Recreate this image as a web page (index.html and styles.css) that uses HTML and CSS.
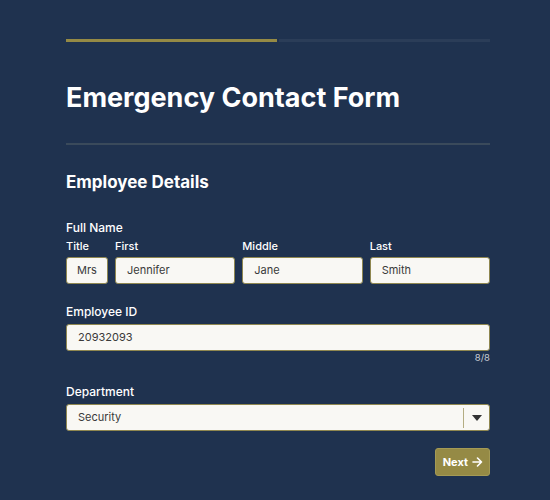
FILE: index.html
```html
<!DOCTYPE html>
<html>
<head>
<meta charset="utf-8">
<link rel="stylesheet" href="styles.css">
</head>
<body>
<div class="page">
  <div class="progress"><div class="progress-fill"></div><div class="progress-track"></div></div>
  <h1 class="title">Emergency Contact Form</h1>
  <hr class="divider">
  <h2 class="section">Employee Details</h2>

  <div class="group group-first">
    <div class="label">Full Name</div>
    <div class="name-row">
      <div class="sub sub-title"><div class="sublabel">Title</div><div class="input center">Mrs</div></div>
      <div class="sub"><div class="sublabel">First</div><div class="input">Jennifer</div></div>
      <div class="sub"><div class="sublabel">Middle</div><div class="input">Jane</div></div>
      <div class="sub"><div class="sublabel">Last</div><div class="input">Smith</div></div>
    </div>
  </div>

  <div class="group">
    <div class="label">Employee ID</div>
    <div class="input">20932093</div>
    <div class="counter">8/8</div>
  </div>

  <div class="group">
    <div class="label">Department</div>
    <div class="input select">
      <span class="select-value">Security</span>
      <span class="select-sep"></span>
      <span class="select-arrow"><svg width="10" height="6" viewBox="0 0 10 6"><path d="M0 0h10L5 6z" fill="#333"/></svg></span>
    </div>
  </div>

  <div class="actions">
    <button class="next">Next <svg width="11" height="10" viewBox="0 0 11 10"><path d="M1 5h8.5M5.5 1l4 4-4 4" fill="none" stroke="#fff" stroke-width="1.6" stroke-linecap="round" stroke-linejoin="round"/></svg></button>
  </div>
</div>
</body>
</html>
```
FILE: styles.css
```css
html, body {
  margin: 0;
  padding: 0;
  background: #1f324f;
  font-family: Inter, "Noto Sans", sans-serif;
  color: #fff;
}
.page {
  width: 424px;
  margin: 0 0 0 66px;
  padding: 39px 0 0;
}
.progress {
  display: flex;
  gap: 2px;
  height: 3px;
}
.progress-fill {
  width: 211px;
  background: #958a45;
}
.progress-track {
  flex: 1;
  background: #2b3d58;
}
.title {
  margin: 39px 0 0;
  font-size: 27px;
  line-height: 34px;
  font-weight: 700;
}
.divider {
  margin: 28px 0 0;
  border: 0;
  height: 2px;
  background: #3a4a5b;
}
.section {
  margin: 27px 0 0;
  font-size: 17px;
  line-height: 21px;
  font-weight: 700;
}
.group {
  margin-top: 20px;
}
.group-first {
  margin-top: 27px;
}
.label {
  font-size: 12px;
  line-height: 16px;
  font-weight: 500;
  margin-bottom: 4px;
}
.name-row {
  display: flex;
  gap: 7px;
}
.sub {
  flex: 1;
}
.sub-title {
  flex: 0 0 42px;
}
.sublabel {
  font-size: 11px;
  line-height: 14px;
  font-weight: 500;
  margin-top: -1px;
  margin-bottom: 4px;
}
.input {
  box-sizing: border-box;
  height: 27px;
  background: #f9f8f4;
  border: 1px solid #8f8750;
  border-radius: 3px;
  color: #3a3a3a;
  font-size: 11px;
  line-height: 25px;
  padding: 0 11px;
}
.input.center {
  text-align: center;
  padding: 0;
}
.counter {
  text-align: right;
  font-size: 9.5px;
  line-height: 12px;
  color: #c8ccd3;
  margin-top: 1px;
}
.select {
  display: flex;
  align-items: center;
  padding-right: 0;
}
.select-value {
  flex: 1;
}
.select-sep {
  width: 1px;
  height: 20px;
  background: #b4ad82;
}
.select-arrow {
  width: 25px;
  display: flex;
  justify-content: center;
  align-items: center;
}
.actions {
  display: flex;
  justify-content: flex-end;
  margin-top: 17px;
}
.next {
  height: 28px;
  padding: 0 6px 0 7px;
  border: 1px solid #a49a55;
  border-radius: 3px;
  background: #958a45;
  color: #fff;
  font-family: Inter, "Noto Sans", sans-serif;
  font-weight: 700;
  font-size: 11px;
  display: flex;
  align-items: center;
  gap: 4px;
}
```
